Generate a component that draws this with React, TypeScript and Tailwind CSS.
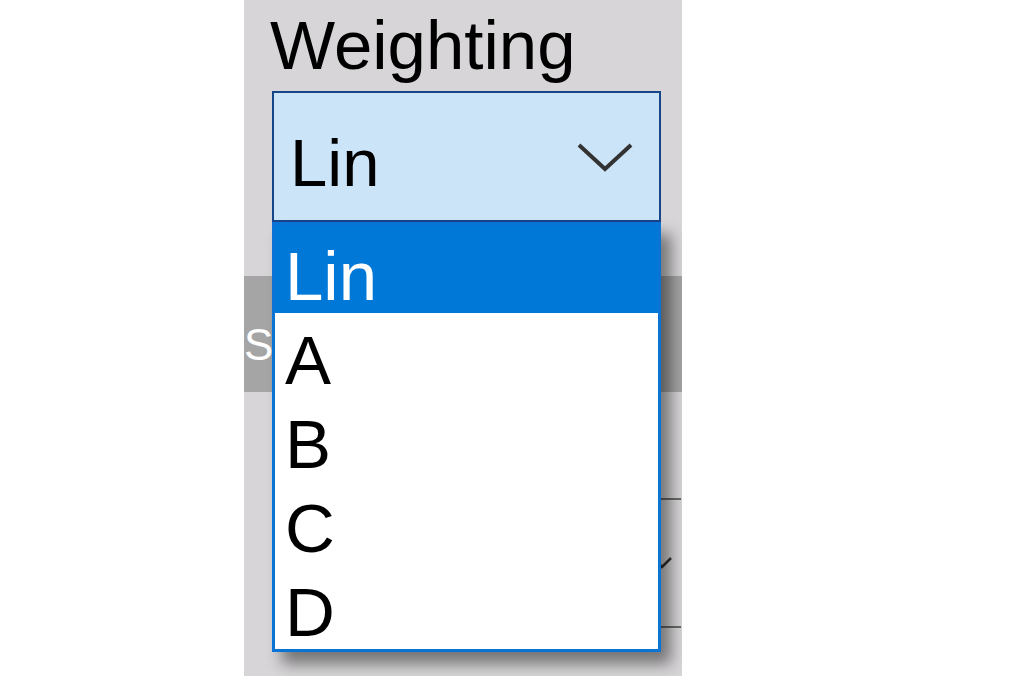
import React from "react";

const items = ["Lin", "A", "B", "C", "D"];

export default function App() {
  return (
    <div className="w-[1024px] h-[676px] bg-white flex font-['Liberation_Sans',Arial,sans-serif]">
      <div className="relative ml-[244px] w-[438px] h-full overflow-hidden bg-[#d7d5d7] flex flex-col">
        <div className="pt-[6px] pl-[26px] text-[69px] leading-[80px] text-black">Weighting</div>

        <div className="mt-[5px] ml-[28px] w-[389px] h-[131px] shrink-0 border-2 border-[#174589] bg-[#cce4f7] flex items-start">
          <span className="mt-[31px] pl-[16px] text-[67px] leading-[77px] text-black">Lin</span>
          <svg className="ml-auto mt-[49px] mr-[25px]" width="58" height="32" viewBox="0 0 58 32" fill="none">
            <path d="M3 3 L29 27 L55 3" stroke="#333" strokeWidth="4" />
          </svg>
        </div>

        <div className="mt-[54px] h-[116px] shrink-0 bg-[#a5a5a5] pt-[44px] text-[44px] leading-[50px] text-white">
          <span className="block w-[28px] overflow-hidden">S</span>
        </div>

        <div className="mt-[106px] ml-[28px] w-[409px] h-[130px] shrink-0 border-y-2 border-[#6a6a6a] flex items-center justify-end pr-[8px]">
          <svg width="22" height="14" viewBox="0 0 22 14" fill="none">
            <path d="M2 2 L11 11 L20 2" stroke="#333" strokeWidth="2.5" />
          </svg>
        </div>

        <div className="absolute left-[28px] top-[222px] w-[389px] h-[430px] border-[3px] border-[#0a74d6] bg-white shadow-[10px_12px_14px_rgba(0,0,0,0.45)] flex flex-col">
          {items.map((it, i) =>
            i === 0 ? (
              <div key={it} className="h-[88px] shrink-0 bg-[#0078d7] pt-[17px] pl-[10px] text-[69px] leading-[70px] text-white">
                {it}
              </div>
            ) : (
              <div key={it} className="h-[84px] shrink-0 pt-[13px] pl-[10px] text-[69px] leading-[70px] text-black">
                {it}
              </div>
            )
          )}
        </div>
      </div>
    </div>
  );
}
